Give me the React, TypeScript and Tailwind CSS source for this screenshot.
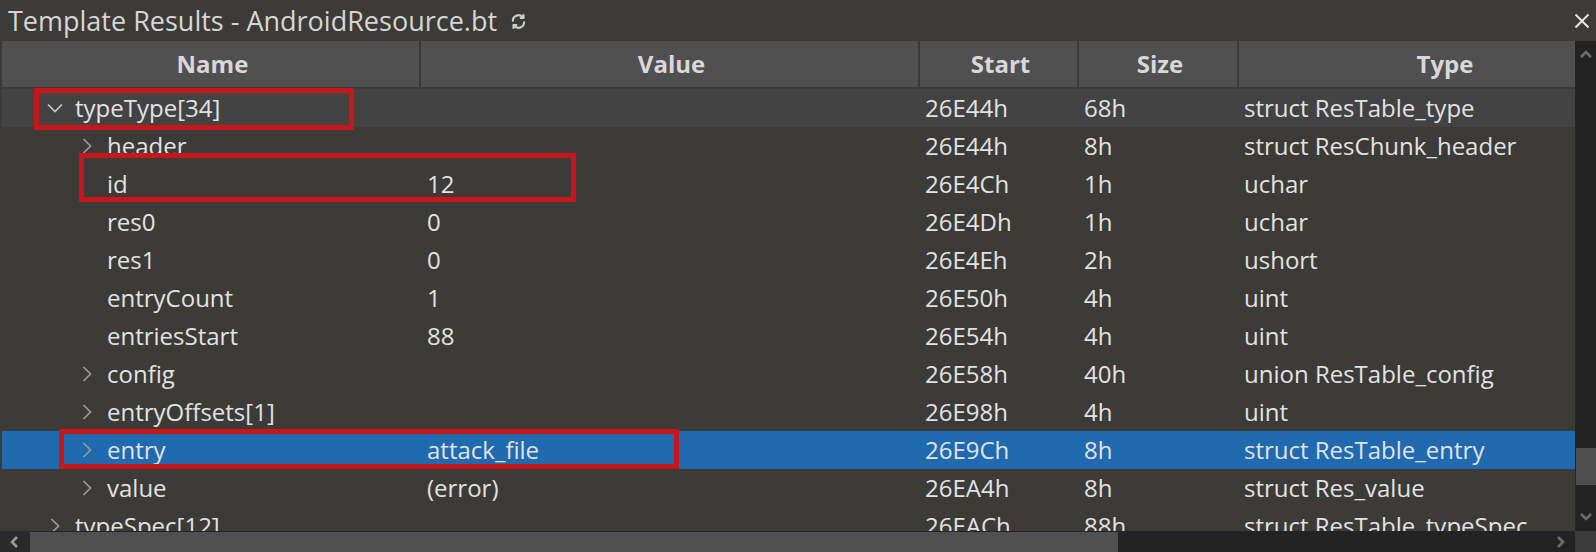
import React from 'react'

type Row = {
  name: string
  depth: number
  chev?: 'open' | 'closed'
  value?: string
  start: string
  size: string
  type: string
  hl?: boolean
  sel?: boolean
}

const rows: Row[] = [
  { name: 'typeType[34]', depth: 0, chev: 'open', start: '26E44h', size: '68h', type: 'struct ResTable_type', hl: true },
  { name: 'header', depth: 1, chev: 'closed', start: '26E44h', size: '8h', type: 'struct ResChunk_header' },
  { name: 'id', depth: 1, value: '12', start: '26E4Ch', size: '1h', type: 'uchar' },
  { name: 'res0', depth: 1, value: '0', start: '26E4Dh', size: '1h', type: 'uchar' },
  { name: 'res1', depth: 1, value: '0', start: '26E4Eh', size: '2h', type: 'ushort' },
  { name: 'entryCount', depth: 1, value: '1', start: '26E50h', size: '4h', type: 'uint' },
  { name: 'entriesStart', depth: 1, value: '88', start: '26E54h', size: '4h', type: 'uint' },
  { name: 'config', depth: 1, chev: 'closed', start: '26E58h', size: '40h', type: 'union ResTable_config' },
  { name: 'entryOffsets[1]', depth: 1, chev: 'closed', start: '26E98h', size: '4h', type: 'uint' },
  { name: 'entry', depth: 1, chev: 'closed', value: 'attack_file', start: '26E9Ch', size: '8h', type: 'struct ResTable_entry', sel: true },
  { name: 'value', depth: 1, chev: 'closed', value: '(error)', start: '26EA4h', size: '8h', type: 'struct Res_value' },
  { name: 'typeSpec[12]', depth: 0, chev: 'closed', start: '26EACh', size: '88h', type: 'struct ResTable_typeSpec' },
]

const cols = 'grid grid-cols-[417px_497px_157px_158px_1fr] gap-x-[2px]'

const Chevron = ({ open }: { open: boolean }) =>
  open ? (
    <svg width="16" height="10" viewBox="0 0 16 10">
      <path d="M1 1.5L8 8.5L15 1.5" fill="none" stroke="#c8c8c8" strokeWidth="1.7" />
    </svg>
  ) : (
    <svg width="10" height="16" viewBox="0 0 10 16">
      <path d="M1.5 1L8.5 8L1.5 15" fill="none" stroke="#9a9a9a" strokeWidth="1.7" />
    </svg>
  )

const Arrow = ({ dir, color }: { dir: 'up' | 'down' | 'left' | 'right'; color: string }) => {
  const d = {
    up: 'M2 9L7 4L12 9',
    down: 'M2 4L7 9L12 4',
    left: 'M9 2L4 7L9 12',
    right: 'M4 2L9 7L4 12',
  }[dir]
  return (
    <svg width="14" height="14" viewBox="0 0 14 14">
      <path d={d} fill="none" stroke={color} strokeWidth="2.6" />
    </svg>
  )
}

const TreeRow = ({ r }: { r: Row }) => (
  <div
    className={`${cols} h-[38px] shrink-0 items-center text-[24px] text-[#e2e2e2] whitespace-nowrap ${
      r.sel ? 'bg-[#206ab0]' : r.hl ? 'bg-[#434343]' : ''
    }`}
  >
    <div className={`flex items-center ${r.depth === 0 ? 'pl-[41px]' : 'pl-[73px]'}`}>
      <div className="w-[24px] flex justify-center">{r.chev && <Chevron open={r.chev === 'open'} />}</div>
      <span className="ml-[8px]">{r.name}</span>
    </div>
    <div className="pl-[6px]">{r.value}</div>
    <div className="pl-[5px]">{r.start}</div>
    <div className="pl-[5px]">{r.size}</div>
    <div className="pl-[5px]">{r.type}</div>
  </div>
)

export default function App() {
  return (
    <div className="relative w-[1596px] h-[552px] overflow-hidden bg-[#3c3b37] flex flex-col font-['Open_Sans',sans-serif] leading-none">
      {/* title bar */}
      <div className="h-[41px] shrink-0 flex items-center pl-[8px] pr-[6px]">
        <span className="text-[27px] text-[#d6d6d6]">Template Results - AndroidResource.bt</span>
        <svg className="ml-[13px] mt-[2px]" width="17" height="17" viewBox="0 0 24 24" fill="none" stroke="#cfcfcf" strokeWidth="3" strokeLinecap="round" strokeLinejoin="round">
          <path d="M4 11a8 8 0 0 1 14.5-4.5" />
          <path d="M19 3v4h-4" />
          <path d="M20 13a8 8 0 0 1-14.5 4.5" />
          <path d="M5 21v-4h4" />
        </svg>
        <div className="flex-1" />
        <svg width="16" height="16" viewBox="0 0 16 16">
          <path d="M1.5 1.5L14.5 14.5M14.5 1.5L1.5 14.5" stroke="#e6e6e6" strokeWidth="2" />
        </svg>
      </div>

      <div className="flex h-[490px] shrink-0">
        {/* table */}
        <div className="flex-1 pl-[2px] overflow-hidden flex flex-col">
          <div className={`${cols} h-[46px] shrink-0 text-[24px] font-bold text-[#d8d8d8]`}>
            <div className="bg-[#505050] flex items-center justify-center pl-[4px]">Name</div>
            <div className="bg-[#505050] flex items-center justify-center pl-[4px]">Value</div>
            <div className="bg-[#505050] flex items-center justify-center pl-[4px]">Start</div>
            <div className="bg-[#505050] flex items-center justify-center pl-[4px]">Size</div>
            <div className="bg-[#505050] flex items-center justify-center pl-[76px]">Type</div>
          </div>
          <div className="mt-[2px] flex flex-col overflow-hidden">
            {rows.map((r) => (
              <TreeRow key={r.name} r={r} />
            ))}
          </div>
        </div>

        {/* vertical scrollbar */}
        <div className="w-[21px] shrink-0 bg-[#232323] flex flex-col">
          <div className="h-[28px] flex items-center justify-center">
            <Arrow dir="up" color="#6c6c6c" />
          </div>
          <div className="h-[379px]" />
          <div className="h-[37px] ml-[1px] bg-[#4f4f4f]" />
          <div className="h-[18px]" />
          <div className="h-[28px] flex items-center justify-center">
            <Arrow dir="down" color="#6c6c6c" />
          </div>
        </div>
      </div>

      {/* horizontal scrollbar */}
      <div className="flex h-[21px] shrink-0">
        <div className="flex-1 flex bg-[#232323]">
          <div className="w-[30px] flex items-center justify-center bg-[#2a2a2a]">
            <Arrow dir="left" color="#9c9c9c" />
          </div>
          <div className="w-[1088px] mt-[1px] bg-[#505050]" />
          <div className="flex-1" />
          <div className="w-[28px] flex items-center justify-center">
            <Arrow dir="right" color="#6c6c6c" />
          </div>
        </div>
        <div className="w-[21px] bg-[#3b3b3b]" />
      </div>

      {/* red annotation boxes */}
      <div className="absolute left-[34px] top-[88px] w-[320px] h-[42px] border-[5px] border-[#c8161a]" />
      <div className="absolute left-[79px] top-[153px] w-[497px] h-[49px] border-[5px] border-[#c8161a]" />
      <div className="absolute left-[59px] top-[429px] w-[620px] h-[40px] border-[5px] border-[#c8161a]" />
    </div>
  )
}
